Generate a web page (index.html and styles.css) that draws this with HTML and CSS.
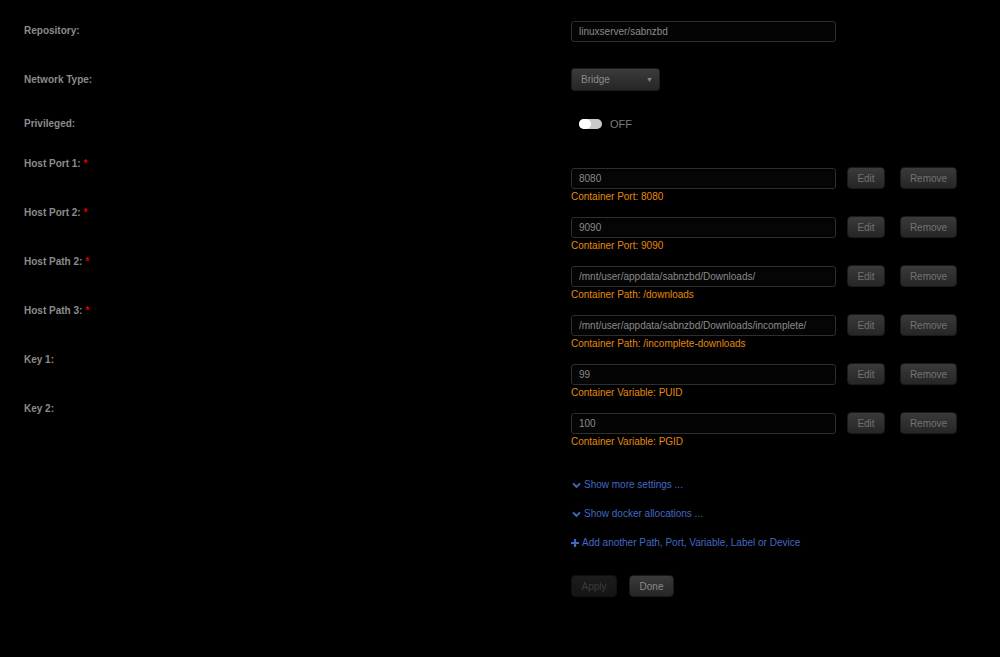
FILE: index.html
```html
<!DOCTYPE html>
<html lang="en">
<head>
    <meta charset="UTF-8">
    <title>Update Container - sabnzbd</title>
    <link rel="stylesheet" href="styles.css">
</head>
<body>
    <main class="form">

        <div class="row row-repo">
            <div class="label">Repository:</div>
            <div class="field">
                <input class="textbox" type="text" value="linuxserver/sabnzbd">
            </div>
        </div>

        <div class="row row-net">
            <div class="label">Network Type:</div>
            <div class="field">
                <div class="select">Bridge <span class="caret">&#9660;</span></div>
            </div>
        </div>

        <div class="row row-priv">
            <div class="label">Privileged:</div>
            <div class="field">
                <span class="switch"><span class="knob"></span></span>
                <span class="switch-text">OFF</span>
            </div>
        </div>

        <div class="row config">
            <div class="label">Host Port 1: <span class="req">*</span></div>
            <div class="field">
                <div class="controls">
                    <input class="textbox" type="text" value="8080">
                    <button class="btn btn-edit">Edit</button>
                    <button class="btn btn-remove">Remove</button>
                </div>
                <div class="hint">Container Port: 8080</div>
            </div>
        </div>

        <div class="row config">
            <div class="label">Host Port 2: <span class="req">*</span></div>
            <div class="field">
                <div class="controls">
                    <input class="textbox" type="text" value="9090">
                    <button class="btn btn-edit">Edit</button>
                    <button class="btn btn-remove">Remove</button>
                </div>
                <div class="hint">Container Port: 9090</div>
            </div>
        </div>

        <div class="row config">
            <div class="label">Host Path 2: <span class="req">*</span></div>
            <div class="field">
                <div class="controls">
                    <input class="textbox" type="text" value="/mnt/user/appdata/sabnzbd/Downloads/">
                    <button class="btn btn-edit">Edit</button>
                    <button class="btn btn-remove">Remove</button>
                </div>
                <div class="hint">Container Path: /downloads</div>
            </div>
        </div>

        <div class="row config">
            <div class="label">Host Path 3: <span class="req">*</span></div>
            <div class="field">
                <div class="controls">
                    <input class="textbox" type="text" value="/mnt/user/appdata/sabnzbd/Downloads/incomplete/">
                    <button class="btn btn-edit">Edit</button>
                    <button class="btn btn-remove">Remove</button>
                </div>
                <div class="hint">Container Path: /incomplete-downloads</div>
            </div>
        </div>

        <div class="row config">
            <div class="label">Key 1:</div>
            <div class="field">
                <div class="controls">
                    <input class="textbox" type="text" value="99">
                    <button class="btn btn-edit">Edit</button>
                    <button class="btn btn-remove">Remove</button>
                </div>
                <div class="hint">Container Variable: PUID</div>
            </div>
        </div>

        <div class="row config">
            <div class="label">Key 2:</div>
            <div class="field">
                <div class="controls">
                    <input class="textbox" type="text" value="100">
                    <button class="btn btn-edit">Edit</button>
                    <button class="btn btn-remove">Remove</button>
                </div>
                <div class="hint">Container Variable: PGID</div>
            </div>
        </div>

        <div class="links">
            <a class="link" href="#">
                <svg class="icon" viewBox="0 0 10 8" width="9" height="7"><path d="M1 1.5 L5 5.5 L9 1.5" fill="none" stroke="currentColor" stroke-width="2.2"/></svg>
                Show more settings ...
            </a>
            <a class="link" href="#">
                <svg class="icon" viewBox="0 0 10 8" width="9" height="7"><path d="M1 1.5 L5 5.5 L9 1.5" fill="none" stroke="currentColor" stroke-width="2.2"/></svg>
                Show docker allocations ...
            </a>
            <a class="link link-add" href="#">
                <svg class="icon" viewBox="0 0 8 8" width="8" height="8"><path d="M4 0 V8 M0 4 H8" fill="none" stroke="currentColor" stroke-width="2.2"/></svg>
                Add another Path, Port, Variable, Label or Device
            </a>
        </div>

        <div class="actions">
            <button class="btn btn-apply" disabled>Apply</button>
            <button class="btn btn-done">Done</button>
        </div>

    </main>
</body>
</html>
```

FILE: styles.css
```css
* { margin: 0; padding: 0; box-sizing: border-box }
html, body { background: #000 }
body { font-family: "Liberation Sans", Arial, Helvetica, sans-serif; font-size: 10px; color: #8a8a8a }

.form { padding: 21px 0 0 24px }

.row { display: grid; grid-template-columns: 547px 1fr }
.label { font-weight: 700; color: #8c8c8c; line-height: 14px }
.req { color: #d00 }

.row-repo { height: 21px; align-items: center; margin-bottom: 26px }
.row-repo .label { margin-top: -2px }
.row-net { height: 23px; align-items: center; margin-bottom: 22px }
.row-priv { height: 22px; align-items: center; margin-bottom: 21px }

.textbox {
    display: block; width: 265px; height: 21px; padding: 0 7px;
    background: #050505; border: 1px solid #2e2e2e; border-radius: 3px;
    box-shadow: inset 0 1px 3px rgba(0, 0, 0, .8);
    font-family: inherit; font-size: 10px; color: #8a8a8a; outline: none
}

.select {
    display: flex; align-items: center; justify-content: space-between;
    width: 89px; height: 23px; padding: 0 6px 0 9px;
    background: linear-gradient(#3b3b3b, #262626);
    border: 1px solid #1c1c1c; border-radius: 3px; color: #8a8a8a
}
.caret { font-size: 7px; color: #8a8a8a }

.row-priv .field { display: flex; align-items: center; padding-left: 8px }
.switch {
    position: relative; display: inline-block; width: 23px; height: 10px;
    border-radius: 5px; background: #c9c9c9
}
.knob { position: absolute; left: 0; top: 0; width: 12px; height: 10px; border-radius: 5px; background: #fff }
.switch-text { margin-left: 8px; font-size: 11px; color: #7a7a7a }

.config { height: 49px }
.config .label { padding-top: 1px }
.config .field { padding-top: 11px }
.controls { display: flex; align-items: center; height: 22px }
.hint { color: #e38a0c; line-height: 14px; padding-top: 1px }

.btn {
    height: 22px; border: 1px solid #1a1a1a; border-radius: 4px;
    background: linear-gradient(#3a3a3a, #262626);
    font-family: inherit; font-size: 10px; color: #727272; text-align: center
}
.btn-edit { width: 38px; margin-left: 11px }
.btn-remove { width: 57px; margin-left: 15px }

.links { display: flex; flex-direction: column; gap: 15px; margin: 28px 0 0 547px }
.link { display: flex; align-items: center; gap: 3px; line-height: 14px; color: #4368c2; text-decoration: none }
.link .icon { margin-left: 1px }
.link-add .icon { margin-left: 0 }

.actions { display: flex; gap: 12px; margin: 25px 0 0 547px }
.btn-apply { width: 46px; background: linear-gradient(#1c1c1c, #141414); border-color: #111; color: #3c3c3c }
.btn-done { width: 45px; color: #8a8a8a }
```
